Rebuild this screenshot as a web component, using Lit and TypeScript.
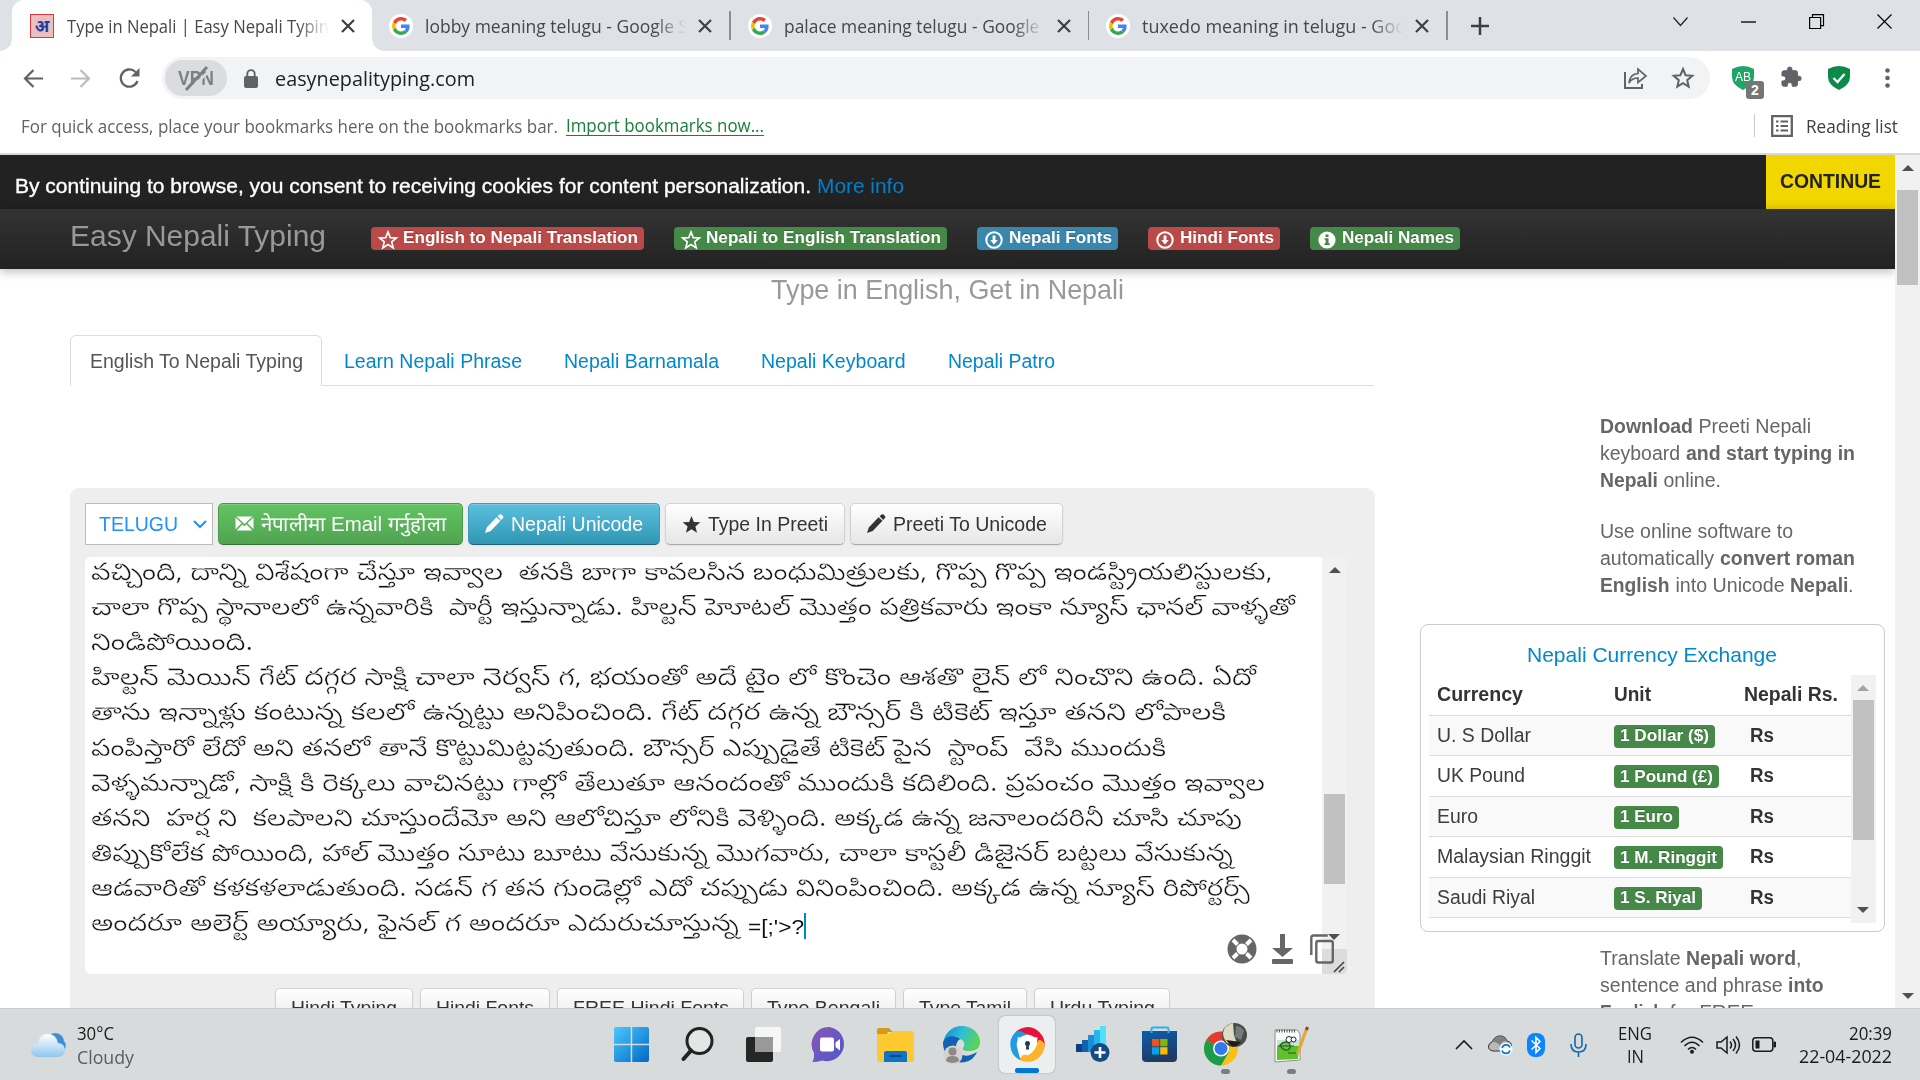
import { LitElement, html, css, svg } from "lit";
import { customElement, property } from "lit/decorators.js";

/** One line of text, stretched or squeezed horizontally to a given measure. */
@customElement("fit-text")
class FitText extends LitElement {
  @property() text = "";
  @property({ type: Number }) w = 0;
  static styles = css`
    :host { display: inline-block; white-space: pre; line-height: inherit; flex: none; }
    .inner { display: inline-block; transform-origin: 0 50%; white-space: pre; }
  `;
  render() {
    return html`<span class="inner">${this.text}</span>`;
  }
  updated() {
    const s = this.renderRoot.querySelector(".inner") as HTMLElement;
    s.style.transform = "none";
    const natural = s.offsetWidth ? s.getBoundingClientRect().width : 0;
    if (natural && this.w) {
      s.style.transform = `scaleX(${this.w / natural})`;
      this.style.width = this.w + "px";
    }
  }
}

const fit = (text: string, w: number, cls = "") => html`<fit-text class=${cls} .text=${text} .w=${w}></fit-text>`;

const icon = (w: number, h: number, box: string, body: unknown, cls = "") =>
  html`<svg class="ic ${cls}" width=${w} height=${h} viewBox=${box}>${body}</svg>`;

const closeX = (s = 12) => icon(s, s, "0 0 12 12", svg`<path d="M0 0l12 12M12 0L0 12" stroke="#3c4043" stroke-width="2.200" fill="none"/>`);

const google = icon(24, 24, "0 0 24 24", svg`
  <circle cx="12" cy="12" r="12" fill="#fff"/>
  <g transform="translate(3 3) scale(.375)">
  <path fill="#EA4335" d="M24 9.5c3.54 0 6.71 1.22 9.21 3.6l6.85-6.85C35.9 2.38 30.47 0 24 0 14.62 0 6.51 5.38 2.56 13.22l7.98 6.19C12.43 13.72 17.74 9.5 24 9.5z"/>
  <path fill="#4285F4" d="M46.98 24.55c0-1.57-.15-3.09-.38-4.55H24v9.02h12.94c-.58 2.96-2.26 5.48-4.78 7.18l7.73 6c4.51-4.18 7.09-10.36 7.09-17.65z"/>
  <path fill="#FBBC05" d="M10.53 28.59c-.48-1.45-.76-2.99-.76-4.59s.27-3.14.76-4.59l-7.98-6.19C.92 16.46 0 20.12 0 24c0 3.88.92 7.54 2.56 10.78l7.97-6.19z"/>
  <path fill="#34A853" d="M24 48c6.48 0 11.93-2.13 15.89-5.81l-7.73-6c-2.15 1.45-4.92 2.3-8.16 2.3-6.26 0-11.57-4.22-13.47-9.91l-7.98 6.19C6.51 42.62 14.62 48 24 48z"/></g>`);

const star = (fill: string, stroke = "none") =>
  svg`<path d="M12 1.200l3 7.600 8.200.5-6.300 5.200 2.100 8-7-4.400-7 4.400 2.100-8L.8 9.300 9 8.800z" fill=${fill} stroke=${stroke} stroke-width="2.200"/>`;
const starHollow = icon(18, 18, "0 0 24 24", star("none", "#fff"));
const downCircle = icon(18, 18, "0 0 18 18", svg`<circle cx="9" cy="9" r="7.7" fill="none" stroke="#fff" stroke-width="2"/><path d="M7.6 4.5h2.8V9h2.4L9 13.4 5.2 9h2.4z" fill="#fff"/>`);
const infoCircle = icon(18, 18, "0 0 18 18", svg`<circle cx="9" cy="9" r="8.6" fill="#fff"/><path d="M7.5 3.6h3v2.3h-3zM6.5 7.2h4v5h1.2v1.7H6.4v-1.7h1.2V8.8H6.5z" fill="#468847"/>`);
const pencil = (c: string) => icon(19, 20, "0 0 19 20", svg`<path d="M0 19l1.800-5.600L11.500 3.200l4 3.600-9.800 10.200z M12.600 2.200L14.500.6q1-.9 2 0l1.500 1.500q.9.900 0 1.900l-1.800 1.900z" fill=${c}/>`);
const mail = icon(19, 15, "0 0 19 15", svg`<path d="M.5 1.6l6 5.7-6 6zM18.5 1.6l-6 5.7 6 6zM1.5.4h16L9.5 8zM1.6 14.6l5.8-6.2 2.1 1.9 2.1-1.9 5.8 6.2z" fill="#fff"/>`);

const arrowTri = (up: boolean, c = "#505050") =>
  icon(12, 6, "0 0 12 6", up ? svg`<path d="M0 6L6 0l6 6z" fill=${c}/>` : svg`<path d="M0 0l6 6 6-6z" fill=${c}/>`);

const telugu: [string, number][] = [
  ["వచ్చింది, దాన్ని విశేషంగా చేస్తూ ఇవ్వాల  తనకి బాగా కావలసిన బంధుమిత్రులకు, గొప్ప గొప్ప ఇండస్ట్రియలిస్టులకు,", 1182],
  ["చాలా గొప్ప స్థానాలలో ఉన్నవారికి  పార్టీ ఇస్తున్నాడు. హిల్టన్ హెూటల్ మొత్తం పత్రికవారు ఇంకా న్యూస్ ఛానల్ వాళ్ళతో", 1204],
  ["నిండిపోయింది.", 162],
  ["హిల్టన్ మెయిన్ గేట్ దగ్గర సాక్షి చాలా నెర్వస్ గ, భయంతో అదే టైం లో కొంచెం ఆశతొ లైన్ లో నించొని ఉంది. ఏదో", 1165],
  ["తాను ఇన్నాళ్లు కంటున్న కలలో ఉన్నట్టు అనిపించింది. గేట్ దగ్గర ఉన్న బౌన్సర్ కి టికెట్ ఇస్తూ తనని లోపాలకి", 1135],
  ["పంపిస్తారో లేదో అని తనలో తానే కొట్టుమిట్టవుతుంది. బౌన్సర్ ఎప్పుడైతే టికెట్ పైన  స్టాంప్  వేసి ముందుకి", 1075],
  ["వెళ్ళమన్నాడో, సాక్షి కి రెక్కలు వాచినట్టు గాల్లో తేలుతూ ఆనందంతో ముందుకి కదిలింది. ప్రపంచం మొత్తం ఇవ్వాల", 1174],
  ["తనని  హర్ష ని  కలపాలని చూస్తుందేమో అని ఆలోచిస్తూ లోనికి వెళ్ళింది. అక్కడ ఉన్న జనాలందరినీ చూసి చూపు", 1151],
  ["తిప్పుకోలేక పోయింది, హాల్ మొత్తం సూటు బూటు వేసుకున్న మొగవారు, చాలా కాస్టలీ డిజైనర్ బట్టలు వేసుకున్న", 1142],
  ["ఆడవారితో కళకళలాడుతుంది. సడన్ గ తన గుండెల్లో ఎదో చప్పుడు వినింపించింది. అక్కడ ఉన్న న్యూస్ రిపోర్టర్స్", 1159],
  ["అందరూ అలెర్ట్ అయ్యారు, ఫైనల్ గ అందరూ ఎదురుచూస్తున్న", 648],
];

const rates: [string, number, string, number][] = [
  ["U. S Dollar", 94, "1 Dollar ($)", 89],
  ["UK Pound", 88, "1 Pound (£)", 93],
  ["Euro", 41, "1 Euro", 53],
  ["Malaysian Ringgit", 154, "1 M. Ringgit", 97],
  ["Saudi Riyal", 98, "1 S. Riyal", 76],
];

const task = {
  weather: icon(37, 32, "0 0 37 32", svg`<defs><linearGradient id="w" x2="0" y2="1"><stop stop-color="#fff"/><stop offset="1" stop-color="#8fc7ee"/></linearGradient></defs>
    <path d="M17 12q1-8 9-8 7 1 8 8 3 3 1 8l-4 4H17z" fill="#3d8fd6"/><path d="M8 28q-7 0-7-7t7-7q2-9 10-9t10 9q7 1 7 7t-7 7z" fill="url(#w)"/>`),
  start: icon(35, 35, "0 0 35 35", svg`<defs><linearGradient id="s" x2="1" y2="1"><stop stop-color="#4cc9fa"/><stop offset="1" stop-color="#0067c8"/></linearGradient></defs>
    <path d="M2 0h14.7v16.7H0V2q0-2 2-2zM18.2 0H33q2 0 2 2v14.7H18.2zM0 18.2h16.7V35H2q-2 0-2-2zM18.2 18.2H35V33q0 2-2 2H18.2z" fill="url(#s)"/>`),
  search: icon(33, 35, "0 0 33 35", svg`<circle cx="18.5" cy="14" r="12.5" fill="#e3e6e7" stroke="#222" stroke-width="3"/><path d="M10 23.5L2.5 32" stroke="#222" stroke-width="4" stroke-linecap="round"/>`),
  view: icon(35, 35, "0 0 35 35", svg`<rect y="10" width="27" height="25" rx="2" fill="#262626"/><rect x="9" y="0" width="26" height="25" rx="2" fill="#fafafa" opacity=".86"/><path d="M9 10h18v15H9z" fill="#999"/>`),
  chat: icon(35, 35, "0 0 35 35", svg`<defs><linearGradient id="c" x2="1" y2="1"><stop stop-color="#8c55b8"/><stop offset="1" stop-color="#4a5acb"/></linearGradient></defs>
    <path d="M17.5 0A17.2 17.2 0 1 1 10 33.5Q5 35 .5 35q2-4 1.5-9A17.3 17.3 0 0 1 17.5 0z" fill="url(#c)"/><rect x="8" y="10.500" width="14" height="14" rx="2" fill="#fff"/><path d="M23.500 15.500l4.500-3.500v11.500l-4.500-3.500z" fill="#fff"/>`),
  files: icon(37, 34, "0 0 37 34", svg`<path d="M0 2q0-2 2-2h10l4 4h-5L9 8H0z" fill="#d79a16"/><path d="M0 6h12l4-3h19q2 0 2 2v27q0 2-2 2H2q-2 0-2-2z" fill="#fdc830"/><path d="M7 34V25q0-2 2-2h19q2 0 2 2v9z" fill="#1173c8"/><path d="M12 28h13" stroke="#0a4b8c" stroke-width="2"/>`),
  edge: icon(37, 37, "0 0 37 37", svg`<defs><linearGradient id="e" x2="1" y2=".4"><stop stop-color="#1580d8"/><stop offset=".55" stop-color="#2fc0d0"/><stop offset="1" stop-color="#59d35c"/></linearGradient></defs>
    <path d="M18.500 0C30 0 37 8 37 16c0 7-5 9-11 9-5 0-7-1-6-3 3-4 1-9-5-9C6 12 2 15 0 20 0 9 8 0 18.500 0z" fill="url(#e)"/><path d="M0 17c2-7 10-9 17-4-4 3-5 8-3 12 4 6 12 6 20 1-3 7-9 10.500-15.500 10.500C8 36.500 0 28 0 17z" fill="#1261b4"/><path d="M16 14q4 0 5 4-3 1-4 5l-3-4z" fill="#d7dbdc"/>
    <circle cx="10" cy="29" r="9.500" fill="#d3d2cf"/><circle cx="9.500" cy="25.500" r="4" fill="#8c8986"/><path d="M3 35q0-5 6.500-5t6.500 5q-3 2-6.500 2T3 35z" fill="#8c8986"/>`),
  avg: icon(35, 35, "0 0 35 35", svg`<circle cx="17.500" cy="17.500" r="14.500" fill="#fff"/><path d="M6 4.500A17.200 17.200 0 0 1 34.500 20l-6-1Q27 8 17 7.500 10 7.500 6 4.500z" fill="#e8123f"/><path d="M34.700 17.500A17.200 17.200 0 0 1 9 32.500l4-4.500q12-1 15.500-15 4-.5 6.200 4.500z" fill="#fdb32a"/><path d="M10.500 33.200A17.200 17.200 0 0 1 7.500 3.500q5 1 10 4Q5 10 7 20q1.500 6 3.500 13.200z" fill="#1f9de0"/><path d="M17.500 7.500q4.500 2.500 10 3 0 13-10 18-10-5-10-18 5.500-.5 10-3z" fill="#fff"/><circle cx="17.500" cy="16.500" r="2.500" fill="#27384c"/><path d="M16.500 16h2l.6 6.500h-3.200z" fill="#27384c"/>`),
  bars: icon(34, 37, "0 0 34 37", svg`<path d="M0 18h7v8H0z" fill="#103f81"/><path d="M6 14h6v12H6z" fill="#1260b0"/><path d="M12 9h6v17h-6z" fill="#1a8fd8"/><path d="M18 4h6v20h-6z" fill="#25b5ee"/><path d="M24 0h6v20h-6z" fill="#50e2fb"/><circle cx="24" cy="26.500" r="9.500" fill="#174a80"/><path d="M24 21v11M18.500 26.500h11" stroke="#fff" stroke-width="2.600"/>`),
  store: icon(35, 35, "0 0 35 35", svg`<defs><linearGradient id="st" x2="0.3" y2="1"><stop stop-color="#0c5fae"/><stop offset="1" stop-color="#1f3a63"/></linearGradient></defs><path d="M0 4h35v27q0 4-4 4H4q-4 0-4-4z" fill="url(#st)"/><path d="M9.500 6V2q0-1.500 1.500-1.500h14q1.500 0 1.500 1.500v4" fill="none" stroke="#28b4e8" stroke-width="2"/><path d="M10 12h7.300v7.300H10z" fill="#f25022"/><path d="M18.200 12h7.300v7.300h-7.300z" fill="#7fba00"/><path d="M10 20.200h7.300v7.300H10z" fill="#00a4ef"/><path d="M18.200 20.200h7.300v7.300h-7.300z" fill="#ffb900"/>`),
  chrome: icon(44, 43, "0 0 44 43", svg`<g transform="translate(1 8)"><circle cx="17" cy="17.500" r="17" fill="#fbc015"/><path d="M17 17.500L2.300 9A17 17 0 0 1 31.700 9z" fill="#e33b2e"/><path d="M17 17.500L2.300 9A17 17 0 0 0 17 34.500L25 21z" fill="#1b9c4b"/><circle cx="17" cy="17.500" r="8" fill="#fff"/><circle cx="17" cy="17.500" r="6.500" fill="#2f78ee"/></g><ellipse cx="31.500" cy="12" rx="12.500" ry="12" fill="#4a4c48"/><path d="M20 10q1-8 10-10l1 12 3 9-10-1q-4-5-4-10z" fill="#dcdcc4"/><path d="M33 3q5 0 8 5l-3 9-6-3z" fill="#767a78"/><path d="M23 17l15 2q-4 5-9 4.500z" fill="#1d1e1a"/>`),
  npp: icon(35, 36, "0 0 35 36", svg`<path d="M1 3h22l3 4v26L1 35z" fill="#fbfbf9" stroke="#777" stroke-width=".8"/><path d="M2.500 4h19" stroke="#555" stroke-width="3" stroke-dasharray="1 1.500"/><path d="M3 13h22v7H3z" fill="#c4e4d8"/><path d="M3 19h22l-1 13-21 1z" fill="#5fc02c"/><path d="M6 18q5-5 9-2 3 4-1 7-5 1-8-5zM4 19h16M14 26h8" stroke="#1c5a18" stroke-width="1.200" fill="#6cc04a"/><circle cx="15" cy="12.500" r="3" fill="#fff" stroke="#222"/><circle cx="19.500" cy="12.500" r="2.500" fill="#fff" stroke="#222"/><path d="M32.500 2L23.500 27" stroke="#e5a52f" stroke-width="3"/><path d="M33.500 0l-1 3" stroke="#9b3c2d" stroke-width="3"/>`),
};

@customElement("app-root")
class AppRoot extends LitElement {
  static styles = css`
    :host { display: block; width: 1920px; height: 1080px; overflow: hidden; background: #fff; color: #333; }
    * { box-sizing: border-box; }
    .ic { display: block; flex: none; overflow: visible; }
    .ui { font-family: "Open Sans", "Noto Sans", sans-serif; }
    .row { display: flex; align-items: center; }

    .tabstrip { height: 51px; background: #dee1e6; padding-left: 12px; font-size: 18px; color: #45474b; }
    .tab { height: 51px; width: 358.500px; padding-left: 17px; position: relative; flex: none; }
    .tab.on { background: #fff; width: 360px; padding-left: 18px; border-radius: 12px 12px 0 0; }
    .tab.on::before, .tab.on::after { content: ""; position: absolute; bottom: 0; width: 12px; height: 12px; }
    .tab.on::before { left: -12px; background: radial-gradient(circle at 0 0, transparent 11.500px, #fff 12px); }
    .tab.on::after { right: -12px; background: radial-gradient(circle at 100% 0, transparent 11.500px, #fff 12px); }
    .tab .line { width: 1.500px; height: 29px; background: #8a8d91; margin-left: 18px; }
    .tab .name { width: 264px; margin: 0 13.500px 0 12px; overflow: hidden; -webkit-mask-image: linear-gradient(90deg, #000 88%, transparent 100%); }
    .tab .name.act { width: 262px; margin: 0 13px 0 13px; }
    .fav { width: 24px; height: 24px; background: #e9bfc0; border: 1.500px solid #d9383c; color: #1c3f9f; font: bold 17px/22px "Noto Sans", sans-serif; text-align: center; }
    .winctl { margin-left: auto; padding-right: 28px; gap: 53px; margin-top: -8px; }
    .plus { margin-left: 23px; }

    .toolbar { height: 54px; padding-left: 23px; }
    .omni { margin-left: 22px; width: 1548px; height: 42px; border-radius: 21px; background: #f1f3f4; padding: 0 15px 0 3px; font-size: 20px; color: #202124; }
    .vpn { width: 62px; height: 36px; border-radius: 18px; background: #dadce0; justify-content: center; position: relative; color: #7b7e83; font: bold 20px "Liberation Sans", sans-serif; }
    .vpn .slash { position: absolute; left: 20px; top: 6px; }
    .ab { position: relative; }
    .ab .badge { position: absolute; left: 14px; top: 15px; width: 18px; height: 18px; border-radius: 3px; background: #757575; color: #fff; font: bold 14px/18px "Liberation Sans", sans-serif; text-align: center; }
    .ab .nm { position: absolute; left: 3px; top: 3px; color: #fff; font: 13px/16px "Liberation Sans", sans-serif; }
    .marks { height: 48px; padding: 0 22px 7px 21px; font-size: 17.500px; color: #5f6368; }
    .marks .lk { color: #188038; border-bottom: 1.500px solid #188038; line-height: 20px; margin-left: 8px; }
    .marks .div { width: 1.500px; height: 23px; background: #c9cbcf; margin: 0 16px 0 auto; }
    .marks .rl { color: #3c4043; margin-left: 13px; }

    .content { height: 855px; border-top: 2px solid #d8d8d8; display: flex; font-family: "Liberation Sans", Arial, sans-serif; font-size: 20px; overflow: hidden; }
    .page { width: 1895px; overflow: hidden; }
    .vscroll { width: 25px; background: #f1f1f1; display: flex; flex-direction: column; align-items: center; }
    .vscroll .thumb { width: 21px; background: #c1c1c1; }
    .vscroll.main { padding: 10px 0 9px; justify-content: flex-start; }
    .vscroll.main .thumb { height: 95px; margin: 19px 0 auto; }
    .cookie { height: 54px; background: #222; color: #fff; padding-left: 15px; }
    .cookie .msg { margin-top: 8px; -webkit-text-stroke: .35px #fff; }
    .cookie .more { color: #0080c9; margin: 8px 0 0 6px; }
    .cookie .go { margin-left: auto; width: 129px; height: 54px; padding-bottom: 1px; background: #f1d600; color: #222; font-weight: bold; justify-content: center; }
    .nav { height: 60px; background: linear-gradient(#333, #222); padding: 0 0 6px 70px; box-shadow: 0 2px 10px rgba(0,0,0,.3); position: relative; color: #999; }
    .brand { font-size: 30px; margin-right: 45px; }
    .label { height: 23px; border-radius: 4px; padding: 0 7px; color: #fff; font-weight: bold; font-size: 17px; text-shadow: 0 -1px 0 rgba(0,0,0,.25); gap: 6px; flex: none; }
    .nav .label { margin: 5px 30px 0 0; padding: 0 6px 1px 8px; }
    .nav .label .ic { margin-top: 3px; }
    .red { background: #b94a48; } .green { background: #468847; } .blue { background: #3a87ad; }
    .main { display: flex; }
    .left { width: 1375px; padding-left: 70px; flex: none; }
    .lead { font-size: 28px; color: #999; height: 66px; padding: 5px 0 0 701px; line-height: 32px; }
    .tabs { height: 51px; border-bottom: 1.500px solid #ddd; color: #0088cc; width: 1304px; }
    .tabs .cur { width: 252px; height: 51px; border: 1.500px solid #ddd; border-bottom: 0; background: #fff; border-radius: 6px 6px 0 0; color: #555; padding: 2px 0 0 19px; margin-right: 22px; flex: none; }
    .tabs > fit-text { margin: 3px 42px 0 0; }
    .panel { margin-top: 102px; width: 1305px; height: 560px; background: #eee; border-radius: 9px; padding: 15px; }
    .btns { gap: 5px; height: 42px; }
    .btn { height: 42px; border-radius: 5px; border: 1px solid #bbb; border-color: #d4d4d4 #d0d0d0 #a8a8a8; background: linear-gradient(#fff, #e6e6e6); color: #333; gap: 7px; justify-content: center; flex: none; box-shadow: inset 0 1px 0 rgba(255,255,255,.2), 0 1px 2px rgba(0,0,0,.05); }
    .btn.g { background: linear-gradient(#62c462, #51a351); border-color: #4a9a4a #4a9a4a #387038; color: #fff; width: 245px; padding-bottom: 2px; }
    .btn.b { background: linear-gradient(#5bc0de, #2f96b4); border-color: #3a9fbd #3a9fbd #1f6377; color: #fff; width: 192px; }
    .sel { width: 128px; height: 42px; border: 1.500px solid #bbb; background: #fff; color: #1e90ff; padding-left: 13px; gap: 15px; }
    .area { margin-top: 12px; width: 1262px; height: 417px; background: #fff; border-radius: 5px; display: flex; position: relative; overflow: hidden; }
    .lines { width: 1237px; padding: 1px 0 0 6px; color: #111; font-family: "Noto Sans Telugu", "Liberation Sans", sans-serif; font-size: 24px; -webkit-text-stroke: .45px #fff; }
    .ln { height: 35.100px; line-height: 35px; display: flex; white-space: pre; align-items: center; }
    .caret { width: 1.500px; height: 26px; background: #0088cc; }
    .tail { margin-left: 9px; font-family: "Liberation Sans", sans-serif; color: #111; font-size: 21px; -webkit-text-stroke: 0; }
    .vscroll.ta { padding-top: 10px; }
    .vscroll.ta .thumb { height: 90px; margin-top: 221px; }
    .corner { position: absolute; right: 0; bottom: 0; width: 25px; height: 25px; background: #dcdcdc; }
    .tools { position: absolute; left: 1142px; top: 377px; gap: 15px; }
    .more-row { display: flex; gap: 7px; margin: 14px 0 0 190px; }
    .more-row .btn { height: 40px; font-size: 19px; }
    .right { width: 520px; padding-top: 144px; color: #666; }
    .para { margin: 0 0 24px 225px; line-height: 27px; }
    .para div { height: 27px; display: flex; white-space: pre; }
    .bold { font-weight: bold; }
    .box { margin: 25px 0 13px 45px; width: 465px; height: 308px; border: 1.500px solid #ccc; border-radius: 8px; padding: 17px 7.500px 0; }
    .box .ttl { color: #0088cc; height: 26px; line-height: 26px; padding-left: 98px; font-size: 21px; }
    .box .body { display: flex; margin-top: 7px; height: 248px; }
    .table { width: 422px; color: #333; }
    .tr { display: flex; height: 40.500px; border-bottom: 1.500px solid #ddd; align-items: center; }
    .tr.odd { background: #f9f9f9; }
    .c1 { width: 185px; padding-left: 8px; color: #3d3d3d; } .c2 { width: 131px; } .c3 { font-weight: bold; padding-left: 5px; }
    .tr.hd { font-weight: bold; } .hd .c3 { padding-left: 0; margin-left: -1px; } .hd .c1 { color: #333; }
    .c2 .label { display: inline-flex; align-items: center; vertical-align: middle; padding: 0 6px; margin-top: 2px; }
    .vscroll.tb { height: 248px; padding: 10px 0; }
    .vscroll.tb .thumb { height: 140px; margin: 9px 0 auto; }

    .taskbar { height: 72px; background: #d7dbdc; border-top: 1.500px solid #c9cdce; padding: 0 28px 0 30px; color: #1b1b1b; font-size: 17.500px; position: relative; }
    .slot { display: flex; justify-content: center; align-items: center; height: 57px; width: 56px; margin-right: 10px; flex: none; position: relative; }
    .slot.on { background: #eceff0; border-radius: 6px; box-shadow: 0 0 1.500px rgba(0,0,0,.4); }
    .slot.on::after { content: ""; position: absolute; bottom: 0; width: 24px; height: 5px; border-radius: 2px; background: #0078d4; }
    .slot.run::after { content: ""; position: absolute; bottom: -1px; width: 9px; height: 5px; border-radius: 3px; background: #7b7e80; }
    .wx { margin-left: 10px; width: 514px; line-height: 24px; display: flex; flex-direction: column; }
    .wx .dim { color: #5a5c5d; }
    .two { display: flex; flex-direction: column; line-height: 23px; }
  `;

  tabItem(title: string, w: number) {
    return html`<div class="tab row">${google}<div class="name">${fit(title, w)}</div>${closeX()}<div class="line"></div></div>`;
  }

  render() {
    return html`
    <div class="tabstrip row ui">
      <div class="tab on row"><div class="fav">अ</div><div class="name act">${fit("Type in Nepali | Easy Nepali Typing", 271)}</div>${closeX()}</div>
      ${this.tabItem("lobby meaning telugu - Google Search", 309)}
      ${this.tabItem("palace meaning telugu - Google Search", 315)}
      ${this.tabItem("tuxedo meaning in telugu - Google Search", 350)}
      <div class="plus">${icon(18, 18, "0 0 18 18", svg`<path d="M9 0v18M0 9h18" stroke="#3c4043" stroke-width="2.500"/>`)}</div>
      <div class="winctl row">
        ${icon(15, 9, "0 0 15 9", svg`<path d="M.5.5l7 8 7-8" fill="none" stroke="#222" stroke-width="1.200"/>`)}
        ${icon(15, 2, "0 0 15 2", svg`<path d="M0 1h15" stroke="#000" stroke-width="1.300"/>`)}
        ${icon(15, 15, "0 0 15 15", svg`<path d="M.6 3.500h11v11H.6zM3.500 3.500V.6h11v11h-3" fill="none" stroke="#000" stroke-width="1.200"/>`)}
        ${icon(15, 15, "0 0 15 15", svg`<path d="M.5.5l14 14M14.500.5l-14 14" stroke="#000" stroke-width="1.200"/>`)}
      </div>
    </div>

    <div class="toolbar row ui">
      ${icon(20, 19, "0 0 20 19", svg`<path d="M20 9.500H2M10.500 1L2 9.500l8.500 8.500" fill="none" stroke="#5f6368" stroke-width="2.200"/>`)}
      <span style="width:28px"></span>
      ${icon(20, 19, "0 0 20 19", svg`<path d="M0 9.500h18M9.500 1L18 9.500 9.500 18" fill="none" stroke="#babcbe" stroke-width="2.200"/>`)}
      <span style="width:28px"></span>
      ${icon(21, 20, "0 0 21 20", svg`<path d="M18.500 13A8.600 8.600 0 1 1 16.500 4" fill="none" stroke="#5f6368" stroke-width="2.300"/><path d="M20.500 0v8.500H12z" fill="#5f6368"/>`)}
      <div class="omni row">
        <div class="vpn row">${fit("VPN", 36)}<span class="slash">${icon(24, 24, "0 0 24 24", svg`<path d="M3 26L25 4" stroke="#dadce0" stroke-width="2.500"/><path d="M1 24L22 1" stroke="#7b7e83" stroke-width="3"/>`)}</span></div>
        <span style="width:17px"></span>
        ${icon(14, 19, "0 0 14 19", svg`<rect y="7" width="14" height="12" rx="2" fill="#5f6368"/><path d="M3.300 8V4.800a3.700 3.700 0 0 1 7.400 0V8" fill="none" stroke="#5f6368" stroke-width="1.900"/>`)}
        <span style="width:17px"></span>
        ${fit("easynepalityping.com", 200)}
        <span style="flex:1"></span>
        ${icon(23, 21, "0 0 23 21", svg`<path d="M1 4v16h17v-4" fill="none" stroke="#5f6368" stroke-width="2"/><path d="M5 15q1-9 9-9.500V1l8 7-8 6.500V10q-6 0-9 5z" fill="none" stroke="#5f6368" stroke-width="1.700"/>`)}
        <span style="width:24px"></span>
        ${icon(24, 24, "0 0 24 24", svg`<path d="M12 3l2.600 6.200 6.700.6-5.100 4.400 1.500 6.500L12 17.200l-5.700 3.500 1.500-6.500-5.100-4.400 6.700-.6z" fill="none" stroke="#5f6368" stroke-width="2"/>`)}
      </div>
      <span style="width:22px"></span>
      <div class="ab">${icon(22, 24, "0 0 22 24", svg`<path d="M0 3Q11-3 22 3v8q0 8-11 13Q0 19 0 11z" fill="#1fa566"/>`)}<span class="nm">${fit("AB", 16)}</span><span class="badge">2</span></div>
      <span style="width:27px"></span>
      ${icon(23, 22, "0 0 24 24", svg`<path transform="translate(-1.500 -1)" d="M20.500 11H19V7c0-1.100-.9-2-2-2h-4V3.500a2.500 2.500 0 0 0-5 0V5H4c-1.100 0-2 .9-2 2v3.800h1.500a2.700 2.700 0 0 1 0 5.400H2V20c0 1.100.9 2 2 2h3.800v-1.500a2.700 2.700 0 0 1 5.400 0V22H17c1.100 0 2-.9 2-2v-4h1.500a2.500 2.500 0 0 0 0-5z" fill="#5f6368" stroke="#5f6368"/>`)}
      <span style="width:24px"></span>
      ${icon(22, 24, "0 0 22 24", svg`<path d="M0 3Q11-3 22 3v8q0 8-11 13Q0 19 0 11z" fill="#0b8a49"/><path d="M5.500 12l4 4 7-8" fill="none" stroke="#fff" stroke-width="2.300"/>`)}
      <span style="width:35px"></span>
      ${icon(5, 20, "0 0 5 20", svg`<circle cx="2.500" cy="2.500" r="2.300" fill="#5f6368"/><circle cx="2.500" cy="10" r="2.300" fill="#5f6368"/><circle cx="2.500" cy="17.500" r="2.300" fill="#5f6368"/>`)}
    </div>

    <div class="marks row ui">
      ${fit("For quick access, place your bookmarks here on the bookmarks bar.", 537)}
      ${fit("Import bookmarks now...", 198, "lk")}
      <div class="div"></div>
      ${icon(22, 22, "0 0 22 22", svg`<path d="M1.200 1.200h19.600v19.600H1.200z" fill="none" stroke="#5f6368" stroke-width="2.300"/><path d="M5 6.500h2.500M5 11h2.500M5 15.500h2.500M9.500 6.500H17M9.500 11H17M9.500 15.500H17" stroke="#5f6368" stroke-width="2"/>`)}
      ${fit("Reading list", 92, "rl")}
    </div>

    <div class="content">
      <div class="page">
        <div class="cookie row">
          ${fit("By continuing to browse, you consent to receiving cookies for content personalization.", 796, "msg")}
          ${fit("More info", 87, "more")}
          <div class="go row">${fit("CONTINUE", 101)}</div>
        </div>
        <div class="nav row">
          ${fit("Easy Nepali Typing", 256, "brand")}
          <span class="label row red">${starHollow}${fit("English to Nepali Translation", 235)}</span>
          <span class="label row green">${starHollow}${fit("Nepali to English Translation", 235)}</span>
          <span class="label row blue">${downCircle}${fit("Nepali Fonts", 103)}</span>
          <span class="label row red">${downCircle}${fit("Hindi Fonts", 94)}</span>
          <span class="label row green">${infoCircle}${fit("Nepali Names", 112)}</span>
        </div>
        <div class="main">
          <div class="left">
            <div class="lead">${fit("Type in English, Get in Nepali", 353)}</div>
            <div class="tabs row">
              <div class="cur row">${fit("English To Nepali Typing", 213)}</div>
              ${fit("Learn Nepali Phrase", 178)}${fit("Nepali Barnamala", 155)}${fit("Nepali Keyboard", 144.500)}${fit("Nepali Patro", 107)}
            </div>
            <div class="panel">
              <div class="btns row">
                <div class="sel row">${fit("TELUGU", 79)}${icon(14, 8, "0 0 14 8", svg`<path d="M1 1l6 6 6-6" fill="none" stroke="#1e90ff" stroke-width="2"/>`)}</div>
                <div class="btn g row">${mail}${fit("नेपालीमा Email गर्नुहोला", 185)}</div>
                <div class="btn b row">${pencil("#fff")}${fit("Nepali Unicode", 132)}</div>
                <div class="btn row" style="width:180px">${icon(19, 19, "0 0 24 24", star("#333"))}${fit("Type In Preeti", 120)}</div>
                <div class="btn row" style="width:213px">${pencil("#333")}${fit("Preeti To Unicode", 154)}</div>
              </div>
              <div class="area">
                <div class="lines">
                  ${telugu.map(([s, w], i) => html`<div class="ln">${fit(s, w)}${i === telugu.length - 1 ? html`${fit("=[;'>?", 56, "tail")}<span class="caret"></span>` : ""}</div>`)}
                </div>
                <div class="vscroll ta">${arrowTri(true)}<div class="thumb"></div></div>
                <div class="corner"></div>
                <div class="tools row">
                  ${icon(30, 30, "0 0 30 30", svg`<circle cx="15" cy="15" r="10" fill="none" stroke="#666" stroke-width="9"/><path d="M6 6l4.500 4.500M24 6l-4.500 4.500M6 24l4.500-4.500M24 24l-4.500-4.500" stroke="#fff" stroke-width="4"/>`)}
                  ${icon(21, 30, "0 0 21 30", svg`<path d="M8 0h5v14h8L10.500 23 0 14h8z" fill="#666"/><rect y="25" width="21" height="5" rx="1" fill="#666"/>`)}
                  ${icon(30, 30, "0 0 30 30", svg`<path d="M3.300 21V4q0-2.500 2.500-2.500h14" fill="none" stroke="#666" stroke-width="2.400"/><rect x="8.300" y="7" width="16.500" height="21.500" rx="2" fill="none" stroke="#666" stroke-width="2.400"/><path d="M20 0h12l-6 6z" fill="#505050"/><path d="M26 38L36 28M31 38l5-5" stroke="#444" stroke-width="1.600"/>`)}
                </div>
              </div>
              <div class="more-row">
                <div class="btn row" style="width:138px">${fit("Hindi Typing", 106)}</div>
                <div class="btn row" style="width:130px">${fit("Hindi Fonts", 98)}</div>
                <div class="btn row" style="width:187px">${fit("FREE Hindi Fonts", 156)}</div>
                <div class="btn row" style="width:145px">${fit("Type Bengali", 113)}</div>
                <div class="btn row" style="width:124px">${fit("Type Tamil", 92)}</div>
                <div class="btn row" style="width:136px">${fit("Urdu Typing", 105)}</div>
              </div>
            </div>
          </div>
          <div class="right">
            <div class="para">
              <div>${fit("Download", 93, "bold")}${fit(" Preeti Nepali", 118)}</div>
              <div>${fit("keyboard ", 85.500)}${fit("and start typing in", 169, "bold")}</div>
              <div>${fit("Nepali", 58, "bold")}${fit(" online.", 63)}</div>
            </div>
            <div class="para">
              <div>${fit("Use online software to", 193)}</div>
              <div>${fit("automatically ", 119.500)}${fit("convert roman", 135, "bold")}</div>
              <div>${fit("English", 69.500, "bold")}${fit(" into Unicode ", 120)}${fit("Nepali", 58.500, "bold")}${fit(".", 5.500)}</div>
            </div>
            <div class="box">
              <div class="ttl">${fit("Nepali Currency Exchange", 250)}</div>
              <div class="body">
                <div class="table">
                  <div class="tr hd"><div class="c1">${fit("Currency", 86)}</div><div class="c2">${fit("Unit", 37)}</div><div class="c3">${fit("Nepali Rs.", 94)}</div></div>
                  ${rates.map(([n, w, u, uw], i) => html`<div class="tr ${i % 2 ? "" : "odd"}"><div class="c1">${fit(n, w)}</div><div class="c2"><span class="label green">${fit(u, uw)}</span></div><div class="c3">${fit("Rs", 24)}</div></div>`)}
                </div>
                <div class="vscroll tb">${arrowTri(true, "#a3a3a3")}<div class="thumb"></div>${arrowTri(false)}</div>
              </div>
            </div>
            <div class="para">
              <div>${fit("Translate ", 86)}${fit("Nepali word", 110, "bold")}${fit(",", 5.500)}</div>
              <div>${fit("sentence and phrase ", 188)}${fit("into", 35.500, "bold")}</div>
              <div>${fit("English", 64, "bold")}${fit(" for FREE", 90)}</div>
            </div>
          </div>
        </div>
      </div>
      <div class="vscroll main">${arrowTri(true)}<div class="thumb"></div>${arrowTri(false)}</div>
    </div>

    <div class="taskbar row ui">
      ${task.weather}
      <div class="wx">${fit("30°C", 37)}${fit("Cloudy", 57, "dim")}</div>
      <span style="width:12px"></span>
      <div class="slot">${task.start}</div>
      <div class="slot">${task.search}</div>
      <div class="slot">${task.view}</div>
      <div class="slot">${task.chat}</div>
      <div class="slot">${task.files}</div>
      <div class="slot">${task.edge}</div>
      <div class="slot on">${task.avg}</div>
      <div class="slot">${task.bars}</div>
      <div class="slot">${task.store}</div>
      <div class="slot run">${task.chrome}</div>
      <div class="slot run">${task.npp}</div>
      <span style="flex:1"></span>
      ${icon(18, 10, "0 0 18 10", svg`<path d="M1 9l8-8 8 8" fill="none" stroke="#1b1b1b" stroke-width="1.600"/>`)}
      <span style="width:15px"></span>
      ${icon(24, 20, "0 0 24 20", svg`<path d="M5 16q-5-1-4.500-5Q1 8 4 7q3-7 10-6 4 1 5 5 5 1 4.500 6-.5 4-5 4z" fill="#b8b8b8" stroke="#333"/><path d="M4.500 7q3-6 9.500-5.500 4 1 5 5-5-1-7 4-3-4-7.500-3.500z" fill="#808080"/><circle cx="18" cy="14" r="6.500" fill="#fff"/><path d="M14 13a4.200 4.200 0 0 1 8-.5M22 15.500a4.200 4.200 0 0 1-8 0" fill="none" stroke="#0078d4" stroke-width="1.700"/>`)}
      <span style="width:15px"></span>
      ${icon(18, 24, "0 0 18 24", svg`<rect width="18" height="24" rx="8" fill="#0a84ff"/><path d="M4.500 7.500l8.500 8-4 4V4.500l4 4-8.500 8" fill="none" stroke="#fff" stroke-width="1.600"/>`)}
      <span style="width:25px"></span>
      ${icon(17, 24, "0 0 17 24", svg`<rect x="5" y="1" width="7" height="14" rx="3.500" fill="none" stroke="#1467a8" stroke-width="1.600"/><path d="M1 11q0 8 7.500 8t7.500-8M8.500 19v5" fill="none" stroke="#1467a8" stroke-width="1.600"/>`)}
      <span style="width:31px"></span>
      <div class="two" style="align-items:center">${fit("ENG", 34)}${fit("IN", 17)}</div>
      <span style="width:28px"></span>
      ${icon(24, 18, "0 0 24 18", svg`<path d="M1 6.500Q12-4 23 6.500M4.500 10q7.500-7.500 15 0M8 13.500q4-4 8 0" fill="none" stroke="#1b1b1b" stroke-width="1.600"/><circle cx="12" cy="15.700" r="2" fill="#1b1b1b"/>`)}
      <span style="width:12px"></span>
      ${icon(24, 20, "0 0 24 20", svg`<path d="M1 7h4l6-5v16l-6-5H1zM14 6.500q3 3.500 0 7M17 4q5 6 0 12M20 1.500q7 8.500 0 17" fill="none" stroke="#1b1b1b" stroke-width="1.500"/>`)}
      <span style="width:12px"></span>
      ${icon(24, 15, "0 0 24 15", svg`<rect x=".8" y=".8" width="20" height="13.400" rx="3" fill="none" stroke="#1b1b1b" stroke-width="1.500"/><rect x="3.500" y="3.500" width="4" height="8" fill="#1b1b1b"/><path d="M22 5h1.500v5H22z" fill="#1b1b1b" stroke="#1b1b1b"/>`)}
      <span style="width:23px"></span>
      <div class="two" style="align-items:flex-end">${fit("20:39", 43)}${fit("22-04-2022", 93)}</div>
    </div>`;
  }
}
